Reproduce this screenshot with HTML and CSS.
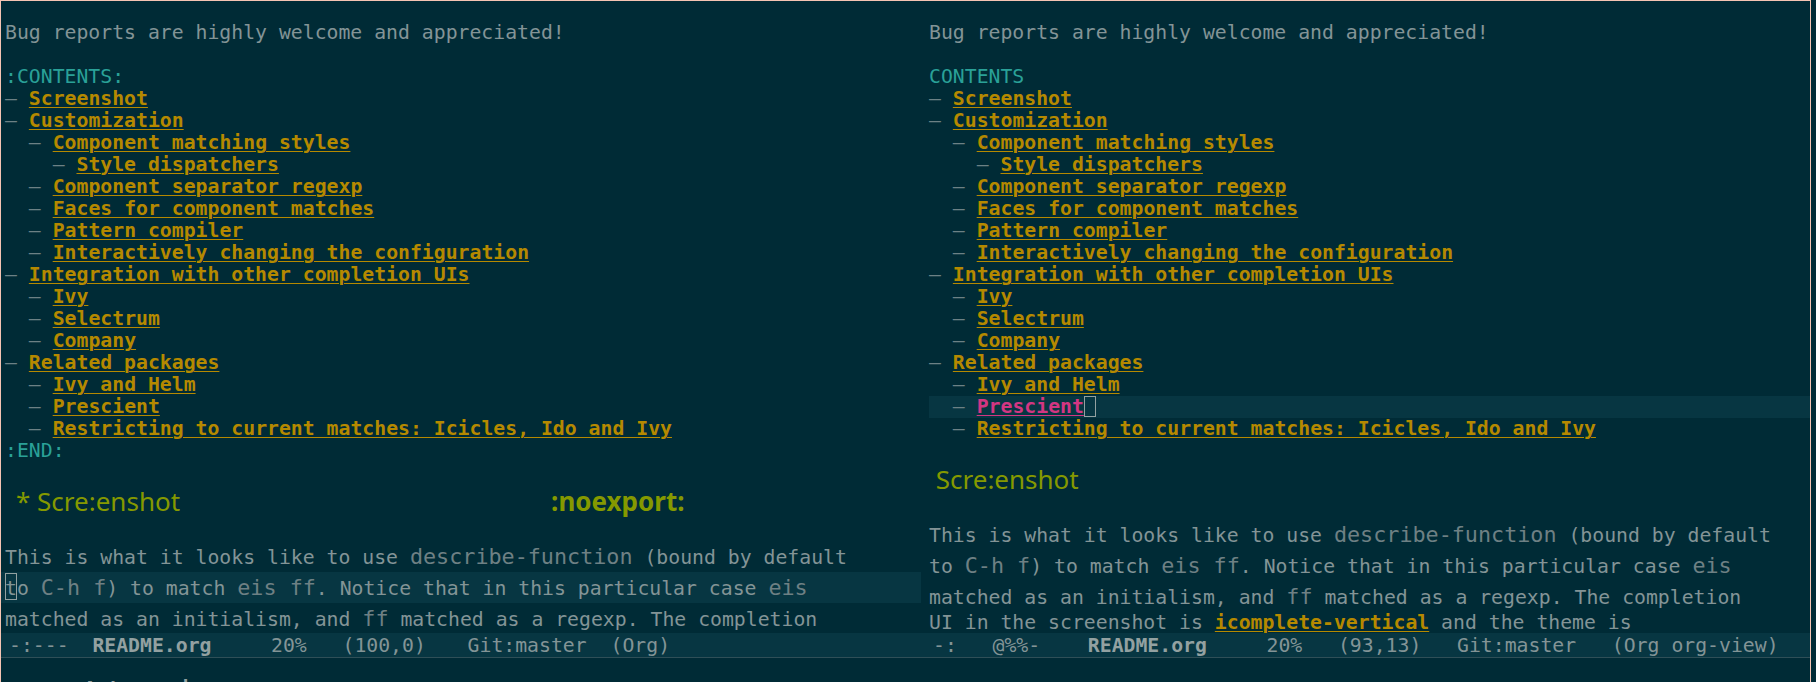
FILE: index.html
```html
<!DOCTYPE html>
<html lang="en">
<head>
<meta charset="utf-8">
<title>README.org</title>
<link rel="stylesheet" href="styles.css">
</head>
<body>
<div class="frame">
  <div class="windows">
    <section class="win left">
      <div class="text">
        <div class="l first"></div>
        <div class="l">Bug reports are highly welcome and appreciated!</div>
        <div class="l"></div>
        <div class="l kw">:CONTENTS:</div>
        <div class="l"><span class="d">–</span> <span class="lk">Screenshot</span></div>
        <div class="l"><span class="d">–</span> <span class="lk">Customization</span></div>
        <div class="l">  <span class="d">–</span> <span class="lk">Component matching styles</span></div>
        <div class="l">    <span class="d">–</span> <span class="lk">Style dispatchers</span></div>
        <div class="l">  <span class="d">–</span> <span class="lk">Component separator regexp</span></div>
        <div class="l">  <span class="d">–</span> <span class="lk">Faces for component matches</span></div>
        <div class="l">  <span class="d">–</span> <span class="lk">Pattern compiler</span></div>
        <div class="l">  <span class="d">–</span> <span class="lk">Interactively changing the configuration</span></div>
        <div class="l"><span class="d">–</span> <span class="lk">Integration with other completion UIs</span></div>
        <div class="l">  <span class="d">–</span> <span class="lk">Ivy</span></div>
        <div class="l">  <span class="d">–</span> <span class="lk">Selectrum</span></div>
        <div class="l">  <span class="d">–</span> <span class="lk">Company</span></div>
        <div class="l"><span class="d">–</span> <span class="lk">Related packages</span></div>
        <div class="l">  <span class="d">–</span> <span class="lk">Ivy and Helm</span></div>
        <div class="l">  <span class="d">–</span> <span class="lk">Prescient</span></div>
        <div class="l">  <span class="d">–</span> <span class="lk">Restricting to current matches: Icicles, Ido and Ivy</span></div>
        <div class="l kw">:END:</div>
        <div class="l"></div>
        <div class="h"><span class="star">*</span> <span class="htitle">Scre:enshot</span><span class="tag">:noexport:</span></div>
        <div class="gap"></div>
        <div class="b">This is what it looks like to use <span class="code">describe-function</span> (bound by default</div>
        <div class="b hl"><span class="cur">t</span>o <span class="code">C-h f</span>) to match <span class="code">eis ff</span>. Notice that in this particular case <span class="code">eis</span></div>
        <div class="b">matched as an initialism, and <span class="code">ff</span> matched as a regexp. The completion</div>
      </div>
      <div class="modeline">-:---  <b>README.org</b>     20%   (100,0)   <span class="git">Git:master</span>  (Org)</div>
    </section>
    <section class="win right">
      <div class="text">
        <div class="l first"></div>
        <div class="l">Bug reports are highly welcome and appreciated!</div>
        <div class="l"></div>
        <div class="l kw">CONTENTS</div>
        <div class="l"><span class="d">–</span> <span class="lk">Screenshot</span></div>
        <div class="l"><span class="d">–</span> <span class="lk">Customization</span></div>
        <div class="l">  <span class="d">–</span> <span class="lk">Component matching styles</span></div>
        <div class="l">    <span class="d">–</span> <span class="lk">Style dispatchers</span></div>
        <div class="l">  <span class="d">–</span> <span class="lk">Component separator regexp</span></div>
        <div class="l">  <span class="d">–</span> <span class="lk">Faces for component matches</span></div>
        <div class="l">  <span class="d">–</span> <span class="lk">Pattern compiler</span></div>
        <div class="l">  <span class="d">–</span> <span class="lk">Interactively changing the configuration</span></div>
        <div class="l"><span class="d">–</span> <span class="lk">Integration with other completion UIs</span></div>
        <div class="l">  <span class="d">–</span> <span class="lk">Ivy</span></div>
        <div class="l">  <span class="d">–</span> <span class="lk">Selectrum</span></div>
        <div class="l">  <span class="d">–</span> <span class="lk">Company</span></div>
        <div class="l"><span class="d">–</span> <span class="lk">Related packages</span></div>
        <div class="l">  <span class="d">–</span> <span class="lk">Ivy and Helm</span></div>
        <div class="l hl">  <span class="d">–</span> <span class="lk active">Prescient</span><span class="cur box"> </span></div>
        <div class="l">  <span class="d">–</span> <span class="lk">Restricting to current matches: Icicles, Ido and Ivy</span></div>
        <div class="l"></div>
        <div class="h"> <span class="htitle">Scre:enshot</span></div>
        <div class="gap r"></div>
        <div class="b">This is what it looks like to use <span class="code">describe-function</span> (bound by default</div>
        <div class="b">to <span class="code">C-h f</span>) to match <span class="code">eis ff</span>. Notice that in this particular case <span class="code">eis</span></div>
        <div class="b">matched as an initialism, and <span class="code">ff</span> matched as a regexp. The completion</div>
        <div class="l">UI in the screenshot is <span class="lk">icomplete-vertical</span> and the theme is</div>
      </div>
      <div class="modeline">-:   @%%-    <b>README.org</b>     20%   (93,13)   Git:master   (Org org-view)</div>
    </section>
  </div>
  <div class="echo"><span class="msg">Auto-saving...</span></div>
</div>
</body>
</html>
```
FILE: styles.css
```css
* { box-sizing: border-box; }

html, body {
  margin: 0;
  padding: 0;
}

body {
  width: 1816px;
  height: 682px;
  overflow: hidden;
  background: #002b36;
  color: #839496;
  font-family: "DejaVu Sans Mono", monospace;
  font-size: 19.8px;
}

.frame {
  width: 1811px;
  height: 682px;
  border-top: 1px solid #f5c4b3;
  border-left: 1px solid #f5c4b3;
  border-right: 1px solid #f5c4b3;
  display: flex;
  flex-direction: column;
}

.windows {
  display: flex;
  height: 657px;
}

.win {
  display: flex;
  flex-direction: column;
  overflow: hidden;
}

.win.left { width: 920px; }
.win.right { width: 889px; }

.text {
  height: 632px;
  overflow: hidden;
}

.l {
  height: 22px;
  line-height: 22px;
  white-space: pre;
}

.l.first { height: 21px; }

.left .l, .left .b { padding-left: 4px; }
.right .l, .right .b, .right .h, .right .gap { margin-left: 8px; }

.kw { color: #2aa198; }
.d { color: #6c8185; }

.lk {
  color: #b58900;
  font-weight: bold;
  text-decoration: underline;
  text-decoration-thickness: 1px;
  text-underline-offset: 2px;
}

.lk.active { color: #d33682; }

.hl { background: #073642; }

.cur {
  box-shadow: inset 0 0 0 1px #93a1a1;
  padding-top: 4px;
}

.cur.box {
  display: inline-block;
  width: 12px;
  height: 21px;
  vertical-align: top;
  padding: 0;
}

.h {
  height: 34px;
  line-height: 34px;
  font-family: "Noto Sans", "Open Sans", sans-serif;
  font-size: 26px;
  color: #859900;
  white-space: pre;
}

.left .h { padding-left: 15px; }
.left .h .htitle {
  display: inline-block;
  width: 514px;
}
.h .tag { font-weight: bold; }

.gap { height: 23px; }

.b {
  height: 31px;
  line-height: 31px;
  white-space: pre;
}

.code {
  font-size: 21.76px;
  color: #6e8084;
}

.modeline {
  height: 25px;
  line-height: 23px;
  padding-top: 1px;
  background: #073642;
  border-bottom: 1px solid #2f4f57;
  white-space: pre;
  color: #839496;
}

.left .modeline { padding-left: 8px; }
.right .modeline { padding-left: 12px; }

.modeline b { color: #93a1a1; }
.modeline .git { padding-left: 6px; }

.echo {
  height: 24px;
  overflow: hidden;
  padding: 20px 0 0 83px;
  line-height: 22px;
  white-space: pre;
}

.echo .msg {
  font-weight: bold;
  color: #93a1a1;
}
```
